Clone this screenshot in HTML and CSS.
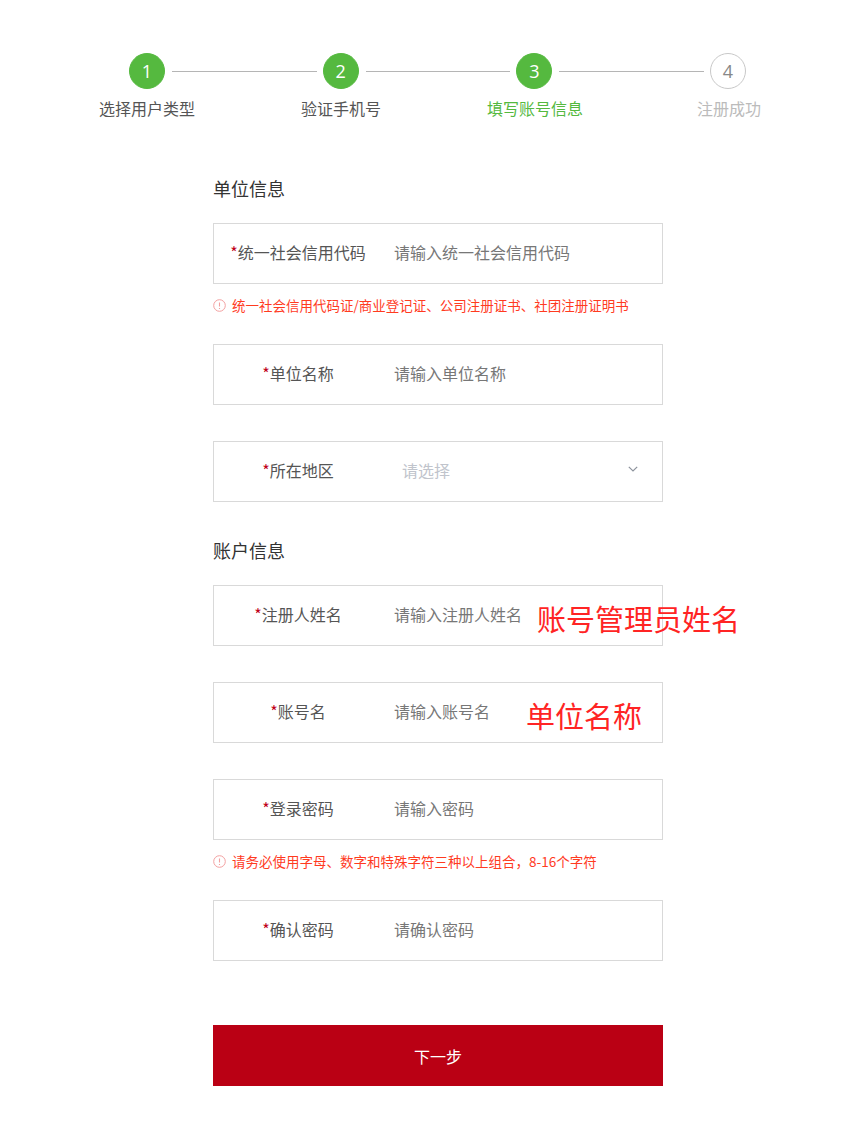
FILE: index.html
```html
<!DOCTYPE html>
<html lang="zh-CN">
<head>
    <meta charset="UTF-8">
    <meta name="viewport" content="width=device-width, initial-scale=1.0">
    <title>填写账号信息</title>
    <link rel="stylesheet" href="styles.css">
</head>
<body>
    <div class="page">
        <div class="steps">
            <div class="step-track">
                <span class="dot done">1</span>
                <span class="line"></span>
                <span class="dot done">2</span>
                <span class="line"></span>
                <span class="dot done">3</span>
                <span class="line"></span>
                <span class="dot">4</span>
            </div>
            <div class="step-labels">
                <span>选择用户类型</span>
                <span>验证手机号</span>
                <span class="current">填写账号信息</span>
                <span class="todo">注册成功</span>
            </div>
        </div>

        <form class="form" action="#" method="post">
            <h3>单位信息</h3>

            <div class="group has-hint">
                <div class="field">
                    <label class="field-label"><i>*</i>统一社会信用代码</label>
                    <input type="text" name="creditCode" placeholder="请输入统一社会信用代码">
                </div>
                <p class="hint">
                    <svg width="13" height="13" viewBox="0 0 13 13"><circle cx="6.5" cy="6.5" r="5.8" fill="none" stroke="#f3a0a0" stroke-width="1"/><path d="M6.5 3.4v4.2M6.5 8.9v1" stroke="#f3a0a0" stroke-width="1.1"/></svg>
                    统一社会信用代码证/商业登记证、公司注册证书、社团注册证明书
                </p>
            </div>

            <div class="group">
                <div class="field">
                    <label class="field-label"><i>*</i>单位名称</label>
                    <input type="text" name="orgName" placeholder="请输入单位名称">
                </div>
            </div>

            <div class="group">
                <div class="field">
                    <label class="field-label"><i>*</i>所在地区</label>
                    <div class="select">
                        <span>请选择</span>
                        <svg width="10" height="6" viewBox="0 0 10 6"><path d="M0.8 0.8L5 5L9.2 0.8" fill="none" stroke="#8d939d" stroke-width="1.2"/></svg>
                    </div>
                </div>
            </div>

            <h3>账户信息</h3>

            <div class="group">
                <div class="field">
                    <label class="field-label"><i>*</i>注册人姓名</label>
                    <input type="text" name="realName" placeholder="请输入注册人姓名">
                    <span class="note note-name">账号管理员姓名</span>
                </div>
            </div>

            <div class="group">
                <div class="field">
                    <label class="field-label"><i>*</i>账号名</label>
                    <input type="text" name="account" placeholder="请输入账号名">
                    <span class="note note-account">单位名称</span>
                </div>
            </div>

            <div class="group has-hint">
                <div class="field">
                    <label class="field-label"><i>*</i>登录密码</label>
                    <input type="password" name="password" placeholder="请输入密码">
                </div>
                <p class="hint">
                    <svg width="13" height="13" viewBox="0 0 13 13"><circle cx="6.5" cy="6.5" r="5.8" fill="none" stroke="#f3a0a0" stroke-width="1"/><path d="M6.5 3.4v4.2M6.5 8.9v1" stroke="#f3a0a0" stroke-width="1.1"/></svg>
                    请务必使用字母、数字和特殊字符三种以上组合，8-16个字符
                </p>
            </div>

            <div class="group">
                <div class="field">
                    <label class="field-label"><i>*</i>确认密码</label>
                    <input type="password" name="confirm" placeholder="请确认密码">
                </div>
            </div>

            <button type="submit" class="next">下一步</button>
        </form>
    </div>
</body>
</html>
```

FILE: styles.css
```css
body {
    font-family: "Noto Sans CJK SC", "Noto Sans", sans-serif;
    margin: 0;
    padding: 0;
    background-color: #fff;
    color: #555;
}

.page {
    padding: 53px 0 40px 27px;
}

/* steps */
.steps {
    width: 776px;
    margin: 0 auto;
}

.step-track {
    display: flex;
    align-items: center;
    padding: 0 80px 0 79px;
}

.dot {
    width: 36px;
    height: 36px;
    box-sizing: border-box;
    border-radius: 50%;
    border: 1px solid #c8c8c8;
    display: flex;
    align-items: center;
    justify-content: center;
    font-family: "Open Sans", sans-serif;
    font-size: 18px;
    color: #888;
    background-color: #fff;
}

.dot.done {
    background-color: #55b93f;
    border-color: #55b93f;
    color: #fff;
}

.line {
    flex: 1;
    height: 1px;
    margin: 0 6px 0 7px;
    background-color: #b5b5b5;
}

.step-labels {
    display: grid;
    grid-template-columns: repeat(4, 194px);
    margin-top: 8px;
}

.step-labels span {
    text-align: center;
    font-size: 16px;
    line-height: 22px;
    color: #555;
}

.step-labels .current {
    color: #55b93f;
}

.step-labels .todo {
    color: #bbb;
}

/* form */
.form {
    width: 450px;
    margin: 0 auto;
}

.form h3 {
    margin: 0 0 23px;
    font-size: 18px;
    line-height: 24px;
    font-weight: normal;
    color: #333;
}

.form h3:first-child {
    margin-top: 57px;
}

.group {
    margin-bottom: 36px;
}

.group.has-hint {
    margin-bottom: 29px;
}

.field {
    position: relative;
    display: flex;
    align-items: center;
    height: 61px;
    box-sizing: border-box;
    padding-bottom: 3px;
    border: 1px solid #d9d9d9;
}

.field-label {
    width: 168px;
    flex-shrink: 0;
    text-align: center;
    font-size: 16px;
    line-height: 22px;
    color: #555;
}

.field-label i {
    font-style: normal;
    color: #c0001a;
}

.field input {
    flex: 1;
    min-width: 0;
    height: 100%;
    border: none;
    outline: none;
    padding: 0 12px;
    font-family: inherit;
    font-size: 16px;
    color: #333;
    background: transparent;
}

.field input::placeholder {
    color: #777;
}

.select {
    flex: 1;
    display: flex;
    align-items: center;
    justify-content: space-between;
    padding: 0 24px 0 20px;
    font-size: 16px;
    color: #c0c4cc;
    cursor: pointer;
}

.select svg {
    margin-top: -2px;
}

.hint {
    display: flex;
    align-items: center;
    gap: 6px;
    margin: 11px 0 0;
    font-size: 13.5px;
    line-height: 20px;
    color: #ff3b1f;
}

/* red annotations laid over the inputs */
.note {
    position: absolute;
    top: 14px;
    font-size: 29px;
    line-height: 36px;
    color: #ff2424;
    white-space: nowrap;
}

.note-name {
    left: 323px;
}

.note-account {
    left: 312px;
}

.next {
    display: block;
    width: 100%;
    height: 61px;
    margin-top: 64px;
    border: none;
    background-color: #ba0014;
    color: #fff;
    font-family: inherit;
    font-size: 16px;
    cursor: pointer;
}

.next:hover {
    background-color: #a00011;
}
```
